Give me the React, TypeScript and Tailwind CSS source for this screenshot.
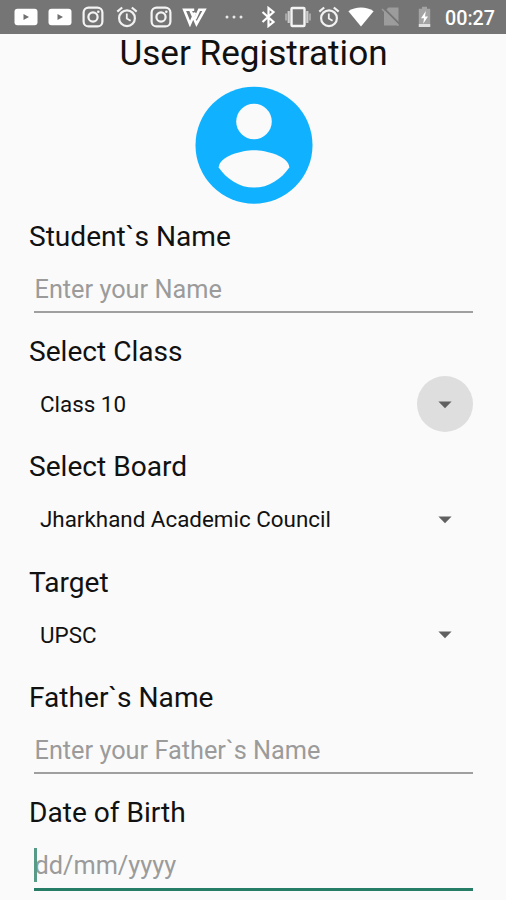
import type { ReactNode } from "react";

function Group({ label, children }: { label: string; children: ReactNode }) {
  return (
    <section className="h-[115.3px] shrink-0">
      <div className="h-[33px] text-[28.1px] leading-[33px] whitespace-nowrap text-[#111]">{label}</div>
      {children}
    </section>
  );
}

function TextField({ hint, focused = false }: { hint: string; focused?: boolean }) {
  return (
    <div
      className={`relative ml-[5px] mt-[22px] w-[439px] text-[25.3px] leading-[30px] text-[#9b9b9b] ${
        focused ? "h-[39.5px] border-b-[3px] border-[#267d66]" : "h-[38px] border-b-2 border-[#9f9f9f]"
      }`}
    >
      {focused && <span className="absolute left-0 -top-[3px] h-[34px] w-[3px] bg-[#579a86]" />}
      <span className="ml-[0.5px] whitespace-nowrap">{hint}</span>
    </div>
  );
}

function Spinner({ value, pressed = false }: { value: string; pressed?: boolean }) {
  return (
    <div className="mt-[8px] ml-[11px] flex h-[56px] w-[433px] items-center justify-between text-[22.4px] leading-[27px] text-[#111]">
      <span className="mt-[1px] whitespace-nowrap">{value}</span>
      <span className={`flex size-[56px] items-center justify-center rounded-full ${pressed ? "bg-[#dedede]" : ""}`}>
        <svg className="mt-[1px]" width="14" height="8" viewBox="0 0 14 8" fill="#606060">
          <path d="M.4.4h13.2L7 7.3z" />
        </svg>
      </span>
    </div>
  );
}

function Youtube() {
  return (
    <svg width="24" height="18" viewBox="0 0 24 18">
      <rect x=".5" y=".8" width="23" height="16.4" rx="3" fill="#fff" />
      <path d="M9.5 6v6l5.5-3z" fill="#707070" />
    </svg>
  );
}

function Instagram() {
  return (
    <svg width="22" height="22" viewBox="0 0 22 22" fill="none" stroke="#f4f4f4">
      <rect x="1.6" y="1.6" width="18.8" height="18.8" rx="5" strokeWidth="2.2" />
      <circle cx="11" cy="11" r="4.6" strokeWidth="2.2" />
      <circle cx="16.3" cy="5.8" r="1.3" fill="#f4f4f4" stroke="none" />
    </svg>
  );
}

function Alarm() {
  return (
    <svg width="22" height="22" viewBox="0 0 22 22" fill="none" stroke="#f2f2f2" strokeWidth="2.2">
      <circle cx="11" cy="12.2" r="7.9" />
      <path d="M10.8 7.4v5.1l3.8 2.3" strokeWidth="1.8" />
      <path d="M1.3 5.6 6.2 1.5M20.7 5.6l-4.9-4.1" />
    </svg>
  );
}

function StatusBar() {
  return (
    <header className="flex h-[33.5px] w-full shrink-0 items-center bg-[#757575] pl-[14px] text-white">
      <Youtube />
      <div className="ml-[10px]"><Youtube /></div>
      <div className="ml-[10px]"><Instagram /></div>
      <div className="ml-[12px]"><Alarm /></div>
      <div className="ml-[12px]"><Instagram /></div>
      <svg className="ml-[10px]" width="25" height="20" viewBox="0 0 25 20" fill="none" stroke="#fff" strokeWidth="2.6">
        <path d="M12.2 2.7H2.2L8 17l5-11.5M8.200 2.700 14.500 17 22.500 2.700H17.200l-4 9" />
      </svg>
      <svg className="ml-[17px]" width="20" height="6" viewBox="0 0 20 6" fill="#e8e8e8">
        <circle cx="3" cy="3" r="1.5" /><circle cx="10" cy="3" r="1.5" /><circle cx="17" cy="3" r="1.5" />
      </svg>
      <svg className="ml-[16.5px]" width="15" height="22" viewBox="0 0 15 22" fill="none" stroke="#fff" strokeWidth="2.2">
        <path d="m1.5 6 11 10-5 4V2l5 4-11 10" />
      </svg>
      <svg className="ml-[9px]" width="26" height="22" viewBox="0 0 26 22" fill="none" stroke="#f4f4f4">
        <rect x="6.5" y="2" width="13" height="18" rx="1" strokeWidth="2.4" />
        <path d="M3.7 5v12M22.3 5v12" stroke="#ccc" strokeWidth="2.2" />
        <path d="M1.2 7.5v7M24.8 7.5v7" stroke="#aaa" strokeWidth="2.2" />
      </svg>
      <div className="ml-[7.5px]"><Alarm /></div>
      <svg className="ml-[8px]" width="26" height="20" viewBox="0 0 26 20" fill="#fff">
        <path d="M13 19.5.4 4.2C7.2-.8 18.8-.8 25.6 4.2z" />
      </svg>
      <svg className="ml-[7px]" width="20" height="21" viewBox="0 0 20 21">
        <path d="M7.5 1.5h10v18H3V6z" fill="#9c9c9c" />
        <path d="m2 1.5 17 17" stroke="#757575" strokeWidth="1.8" />
        <path d="m1 3 16.5 16.5" stroke="#9c9c9c" strokeWidth="1.4" />
      </svg>
      <svg className="ml-[16.5px]" width="13" height="22" viewBox="0 0 13 22">
        <path d="M4 .8h5v2h3.2V21H.8V2.8H4z" fill="#a3a3a3" />
        <path d="M.8 18h11.4v3H.8z" fill="#e0e0e0" />
        <path d="M7.8 5 3 12.3h3l-.8 5.4L10 10.5H7z" fill="#fff" />
      </svg>
      <span className="ml-[14.5px] mt-[3px] text-[19.7px] leading-[23px] font-medium whitespace-nowrap">00:27</span>
    </header>
  );
}

export default function App() {
  return (
    <main className="flex h-[900px] w-[506px] flex-col overflow-hidden bg-[#fafafa] font-['Roboto',sans-serif]">
      <StatusBar />
      <h1 className="h-[39px] shrink-0 pl-px text-center text-[35.15px] leading-[39px] whitespace-nowrap text-[#111]">
        User Registration
      </h1>
      <svg className="mt-[13.5px] ml-[194.5px] shrink-0" width="118" height="118" viewBox="0 0 118 118">
        <circle cx="59" cy="59.2" r="58.5" fill="#10b1ff" />
        <circle cx="59" cy="35.5" r="17.8" fill="#fafafa" />
        <path d="M23.7 81.4C24 70 47.3 64.2 59 64.2S94 70 94.3 81.4C86.7 92.7 73.6 101.6 59 101.6S31.3 92.7 23.7 81.4z" fill="#fafafa" />
      </svg>
      <div className="mt-[15.9px] ml-[29px] flex flex-col">
        <Group label="Student`s Name">
          <TextField hint="Enter your Name" />
        </Group>
        <Group label="Select Class">
          <Spinner value="Class 10" pressed />
        </Group>
        <Group label="Select Board">
          <Spinner value="Jharkhand Academic Council" />
        </Group>
        <Group label="Target">
          <Spinner value="UPSC" />
        </Group>
        <Group label="Father`s Name">
          <TextField hint="Enter your Father`s Name" />
        </Group>
        <Group label="Date of Birth">
          <TextField hint="dd/mm/yyyy" focused />
        </Group>
      </div>
    </main>
  );
}
